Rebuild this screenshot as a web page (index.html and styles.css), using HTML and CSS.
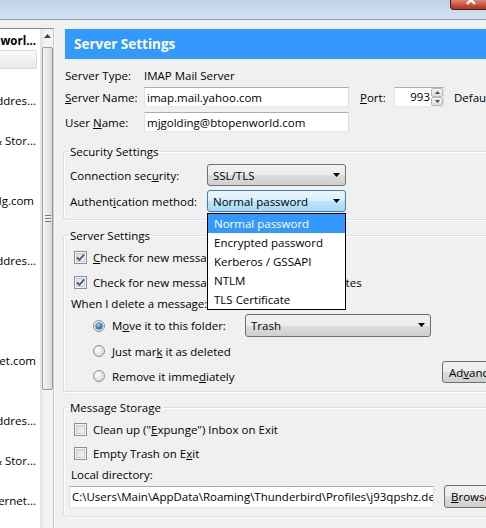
FILE: index.html
```html
<!DOCTYPE html>
<html>
<head>
<meta charset="utf-8">
<link rel="stylesheet" href="styles.css">
</head>
<body>
<div class="titlebar">
  <div class="close"><svg width="14" height="10" viewBox="0 0 14 10"><path d="M2 -4L10 4M10 -4L2 4" stroke="#fff" stroke-width="2.4" fill="none"/></svg></div>
</div>
<div class="main">
  <div class="tree">
    <div class="list">
      <div class="row acct"><span>mjgolding@btopenworl...</span></div>
      <div class="row sel"><div class="selbox"></div></div>
      <div class="row"></div>
      <div class="row"><span>Composition &amp; Addres...</span></div>
      <div class="row"></div>
      <div class="row"><span>Synchronization &amp; Stor...</span></div>
      <div class="row"></div>
      <div class="row"></div>
      <div class="row r-g"><span>mjgolding@mailg.com</span></div>
      <div class="row"></div>
      <div class="row"></div>
      <div class="row"><span>Composition &amp; Addres...</span></div>
      <div class="row"></div>
      <div class="row"></div>
      <div class="row"></div>
      <div class="row"></div>
      <div class="row"><span>mjgolding@btinternet.com</span></div>
      <div class="row"></div>
      <div class="row"></div>
      <div class="row"><span>Composition &amp; Addres...</span></div>
      <div class="row"></div>
      <div class="row"><span>Synchronization &amp; Stor...</span></div>
      <div class="row"></div>
      <div class="row"><span>Movie Internet...</span></div>
      <div class="row"></div>
    </div>
    <div class="scrollbar">
      <div class="sb-btn"><svg width="7" height="4" viewBox="0 0 7 4"><path d="M0 4L3.5 0L7 4z" fill="#404040"/></svg></div>
      <div class="thumb"><div class="grip"></div></div>
    </div>
  </div>
  <div class="splitter"></div>
  <div class="panel">
    <div class="header">Server Settings</div>
    <div class="info">
      <div class="frow r-type"><span class="lbl">Server Type:</span><span class="val">IMAP Mail Server</span></div>
      <div class="frow r-name">
        <span class="lbl"><u>S</u>erver Name:</span>
        <div class="input w-server">imap.mail.yahoo.com</div>
        <span class="port-lbl"><u>P</u>ort:</span>
        <div class="port">
          <div class="port-txt">993</div>
          <div class="spin">
            <div class="spin-btn"><svg width="5" height="3" viewBox="0 0 5 3"><path d="M0 3L2.5 0L5 3z" fill="#4d4d4d"/></svg></div>
            <div class="spin-btn"><svg width="5" height="3" viewBox="0 0 5 3"><path d="M0 0L2.5 3L5 0z" fill="#4d4d4d"/></svg></div>
          </div>
        </div>
        <span class="deflt">Default: 993</span>
      </div>
      <div class="frow r-user"><span class="lbl">User <u>N</u>ame:</span><div class="input w-server">mjgolding@btopenworld.com</div></div>
    </div>

    <fieldset class="grp g-sec">
      <legend>Security Settings</legend>
      <div class="srow">
        <span class="slbl">Connection sec<u>u</u>rity:</span>
        <div class="select">SSL/TLS<svg class="arr" width="7" height="4" viewBox="0 0 7 4"><path d="M0 0h7L3.5 4z"/></svg></div>
      </div>
      <div class="srow gap4">
        <span class="slbl">Authent<u>i</u>cation method:</span>
        <div class="select focus">Normal password<svg class="arr" width="7" height="4" viewBox="0 0 7 4"><path d="M0 0h7L3.5 4z"/></svg>
          <div class="popup">
            <div class="opt hl">Normal password</div>
            <div class="opt">Encrypted password</div>
            <div class="opt">Kerberos / GSSAPI</div>
            <div class="opt">NTLM</div>
            <div class="opt">TLS Certificate</div>
          </div>
        </div>
      </div>
    </fieldset>

    <fieldset class="grp g-srv">
      <legend>Server Settings</legend>
      <div class="cb-row r1">
        <span class="cb on"><svg width="9" height="9" viewBox="0 0 9 9"><path d="M1 4.5L3.5 7L8 1.5" stroke="#41528a" stroke-width="1.8" fill="none"/></svg></span>
        <span><u>C</u>heck for new messages at startup</span>
      </div>
      <div class="cb-row r2">
        <span class="cb on"><svg width="9" height="9" viewBox="0 0 9 9"><path d="M1 4.5L3.5 7L8 1.5" stroke="#41528a" stroke-width="1.8" fill="none"/></svg></span>
        <span>Check for new messages ever<u>y</u></span>
        <div class="input mins">10</div>
        <span>minutes</span>
      </div>
      <div class="when">When I delete a message:</div>
      <div class="del-area">
        <div class="radios">
          <div class="rrow rr1">
            <span class="rb on"></span>
            <span class="rtxt">M<u>o</u>ve it to this folder:</span>
            <div class="select trash">Trash<svg class="arr" width="7" height="4" viewBox="0 0 7 4"><path d="M0 0h7L3.5 4z"/></svg></div>
          </div>
          <div class="rrow rr2"><span class="rb"></span><span class="rtxt">Just mar<u>k</u> it as deleted</span></div>
          <div class="rrow rr3"><span class="rb"></span><span class="rtxt">Remove it imme<u>d</u>iately</span></div>
        </div>
        <div class="btn adv">Ad<u>v</u>anced...</div>
      </div>
    </fieldset>

    <fieldset class="grp g-ms">
      <legend>Message Storage</legend>
      <div class="cb-row m1"><span class="cb"></span><span>Clean up ("<u>E</u>xpunge") Inbox on Exit</span></div>
      <div class="cb-row m2"><span class="cb"></span><span>Empty Trash on E<u>x</u>it</span></div>
      <div class="when ld">Local directory:</div>
      <div class="dir-row">
        <div class="input dir">C:\Users\Main\AppData\Roaming\Thunderbird\Profiles\j93qpshz.default</div>
        <div class="btn browse"><u>B</u>rowse...</div>
      </div>
    </fieldset>
  </div>
</div>
</body>
</html>
```

FILE: styles.css
```css
* { box-sizing: border-box; }
html, body { margin: 0; padding: 0; }
body {
  width: 486px;
  height: 528px;
  overflow: hidden;
  background: #f0f0f0;
  font-family: "Open Sans", "Noto Sans", sans-serif;
  font-size: 11.5px;
  line-height: 15px;
  color: #000;
}
u { text-decoration: underline; text-underline-offset: 1px; text-decoration-thickness: 1px; }

/* title bar */
.titlebar {
  height: 20px;
  background: linear-gradient(to bottom, #bcd2ea, #d3e2f2);
  border-bottom: 1px solid #8797aa;
  display: flex;
  justify-content: flex-end;
  align-items: flex-start;
  overflow: hidden;
}
.close {
  width: 44px;
  height: 10px;
  margin-right: -8px;
  background: linear-gradient(#d98a7c, #c4432f 70%, #b5351f);
  border: 1px solid #4e1c13;
  border-top: 0;
  border-radius: 0 0 4px 4px;
  display: flex;
  justify-content: center;
  align-items: flex-start;
}

/* main */
.main {
  display: flex;
  height: 500px;
  margin-top: 8px;
}
.tree {
  width: 54px;
  flex: none;
  display: flex;
  background: #fff;
  border-top: 1px solid #828790;
  border-right: 1px solid #c8c8c8;
}
.list {
  width: 40px;
  flex: none;
  overflow: hidden;
  padding-top: 1px;
}
.row {
  height: 20px;
  display: flex;
  justify-content: flex-end;
  align-items: center;
  overflow: hidden;
  white-space: nowrap;
  padding-right: 4px;
}
.row.acct { font-weight: bold; }
.row.r-g { padding-right: 6px; }
.row.sel { padding-right: 3px; }
.selbox {
  width: 100%;
  height: 19px;
  margin-top: -2px;
  border: 1px solid #d9d9d9;
  border-left: 0;
  border-radius: 0 2px 2px 0;
  background: linear-gradient(#fafafa, #e8e8e8);
}
.scrollbar {
  width: 13px;
  flex: none;
  background: linear-gradient(to right, #e6e6e6, #f4f4f4 40%, #f4f4f4);
  border-left: 1px solid #e3e3e3;
  display: flex;
  flex-direction: column;
}
.sb-btn {
  height: 17px;
  display: flex;
  justify-content: center;
  align-items: center;
  padding-bottom: 4px;
}
.thumb {
  height: 343px;
  margin: 1px 0 0 1px;
  border: 1px solid #9a9a9a;
  border-radius: 2px;
  background: linear-gradient(to right, #f6f6f6, #e8e8e8 50%, #d9d9d9);
  display: flex;
  justify-content: center;
  align-items: center;
}
.grip {
  width: 6px;
  height: 7px;
  background: repeating-linear-gradient(to bottom, #7a7a7a 0 1px, #f6f6f6 1px 2px, transparent 2px 3px);
}
.splitter {
  width: 9px;
  flex: none;
  border-left: 1px solid #fdfdfd;
}

/* panel */
.panel {
  width: 440px;
  flex: none;
}
.header {
  margin: 1px 0 0 2px;
  height: 30px;
  background: #3399ff;
  color: #fff;
  font-weight: bold;
  font-size: 13.5px;
  padding-left: 9px;
  display: flex;
  align-items: center;
}
.info { padding-left: 2px; }
.frow { display: flex; align-items: center; white-space: nowrap; }
.r-type { height: 18px; margin-top: 7px; }
.r-name { height: 20px; margin-top: 3px; }
.r-user { height: 20px; margin-top: 5px; }
.lbl { width: 79px; flex: none; }
.input {
  height: 20px;
  background: #fff;
  border: 1px solid;
  border-color: #abadb3 #dbdfe6 #e3e9ef #e2e3ea;
  padding: 0 2px;
  display: flex;
  align-items: center;
  white-space: nowrap;
  overflow: hidden;
  flex: none;
}
.w-server { width: 205px; }
.port-lbl { margin-left: 11px; width: 34px; flex: none; }
.port {
  width: 50px;
  height: 20px;
  flex: none;
  display: flex;
  background: #fff;
  border: 1px solid;
  border-color: #abadb3 #dbdfe6 #e3e9ef #e2e3ea;
}
.port-txt { flex: 1; text-align: right; padding-right: 1px; line-height: 18px; }
.spin { width: 12px; display: flex; flex-direction: column; }
.spin-btn {
  flex: 1;
  display: flex;
  justify-content: center;
  align-items: center;
  background: linear-gradient(#f4f4f4, #dedede);
  border: 1px solid #b9b9b9;
  border-radius: 2px;
}
.deflt { margin-left: 10px; }

/* group boxes */
.grp {
  margin: 0;
  padding: 0 6px;
  min-width: 0;
  width: 440px;
  border: 1px solid #d5dfe5;
  border-radius: 3px;
  box-shadow: inset 1px 1px 0 #fff, 1px 1px 0 #fff;
}
.grp legend {
  padding: 0 2px;
  margin-left: -2px;
  line-height: 15px;
}
.g-sec { margin-top: 12px; padding-top: 5px; padding-bottom: 7px; }
.srow { display: flex; align-items: center; height: 22px; }
.gap4 { margin-top: 4px; }
.slbl { width: 137px; flex: none; }
.select {
  position: relative;
  width: 139px;
  height: 22px;
  flex: none;
  border: 1px solid #707070;
  border-radius: 3px;
  background: linear-gradient(#f2f2f2, #ebebeb 50%, #dddddd 50%, #cfcfcf);
  padding-left: 5px;
  display: flex;
  align-items: center;
  white-space: nowrap;
}
.select .arr { position: absolute; right: 5px; top: 8px; }
.select.focus {
  border-color: #3c7fb1;
  background: linear-gradient(#eaf6fd, #d9f0fc 50%, #bee6fd 50%, #a7d9f5);
}
.popup {
  position: absolute;
  left: -1px;
  top: calc(100% + 2px);
  width: 139px;
  border: 1px solid #000;
  background: #fff;
  z-index: 5;
}
.opt { height: 19px; line-height: 19px; padding-left: 6px; }
.opt.hl { background: #3399ff; color: #fff; }

.g-srv { margin-top: 8px; padding-top: 3px; padding-bottom: 4px; }
.cb-row { display: flex; align-items: center; height: 22px; padding-left: 4px; white-space: nowrap; }
.cb-row.r2 { margin-top: 3px; }
.cb {
  width: 13px;
  height: 13px;
  flex: none;
  margin-right: 6px;
  border: 1px solid #8e8f8f;
  background: linear-gradient(135deg, #d6d8dc, #f7f7f7);
  box-shadow: inset 0 0 0 1px #f4f4f4, inset 0 0 0 2px #c9ccd1;
  display: flex;
  justify-content: center;
  align-items: center;
}
.mins { width: 49px; height: 20px; margin: 0 6px; justify-content: flex-end; }
.when { height: 18px; margin-top: 1px; display: flex; align-items: center; padding-left: 1px; }
.del-area { display: flex; margin-top: 2px; }
.radios { margin-left: 23px; width: 338px; flex: none; }
.rrow { display: flex; align-items: center; height: 22px; white-space: nowrap; }
.rr1 { height: 23px; }
.rr2, .rr3 { margin-top: 3px; }
.rb {
  width: 12px;
  height: 12px;
  flex: none;
  border-radius: 50%;
  border: 1px solid #8e8f8f;
  background: radial-gradient(circle at 40% 35%, #ffffff, #e6e6e6 50%, #cfcfcf);
  margin-right: 7px;
  position: relative;
}
.rb.on::after {
  content: "";
  position: absolute;
  left: 2px;
  top: 2px;
  width: 6px;
  height: 6px;
  border-radius: 50%;
  background: radial-gradient(circle at 40% 35%, #8fe0ff, #1c7fbf 55%, #0c4a78);
  box-shadow: 0 0 0 0.5px #1b4f7c;
}
.rtxt { flex: none; }
.trash { width: 186px; height: 23px; margin-left: auto; }
.btn {
  height: 22px;
  border: 1px solid #707070;
  border-radius: 3px;
  background: linear-gradient(#f2f2f2, #ebebeb 50%, #dddddd 50%, #cfcfcf);
  padding: 0 6px;
  display: flex;
  align-items: center;
  white-space: nowrap;
  flex: none;
}
.adv { align-self: flex-end; margin-left: 11px; margin-bottom: 4px; width: 80px; }

.g-ms { margin-top: 8px; padding-top: 3px; padding-bottom: 8px; }
.cb-row.m2 { margin-top: 2px; }
.when.ld { margin-top: 1px; }
.dir-row { display: flex; align-items: center; margin-top: 2px; }
.dir { width: 365px; height: 22px; margin-left: -1px; }
.browse { margin-left: 10px; width: 80px; height: 23px; }
```
